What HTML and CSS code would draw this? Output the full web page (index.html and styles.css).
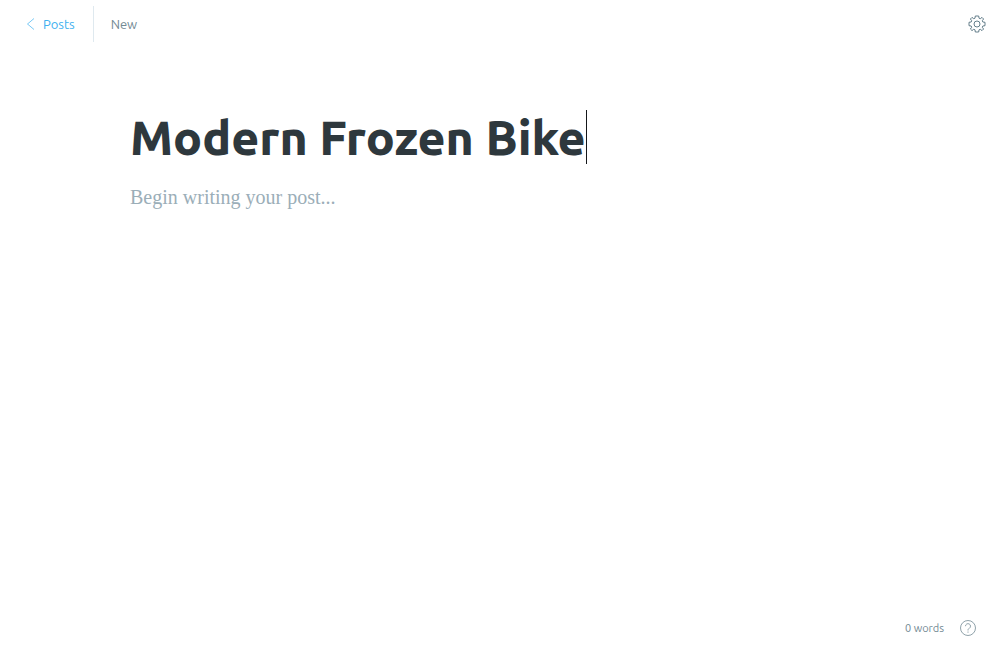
FILE: index.html
```html
<!DOCTYPE html>
<html lang="en">
<head>
<meta charset="utf-8">
<meta name="viewport" content="width=device-width, initial-scale=1">
<title>New post</title>
<link rel="stylesheet" href="styles.css">
</head>
<body class="editor">
<header class="topbar">
  <a class="back" href="#posts">
    <svg class="chevron" viewBox="0 0 8 12" aria-hidden="true"><path d="M7.500 .5 1 6l6.500 5.500"/></svg>
    <span>Posts</span>
  </a>
  <span class="status">New</span>
  <button class="icon-button settings" type="button" aria-label="Settings">
    <svg class="gear" viewBox="0 0 18 18" aria-hidden="true"><path d="M7.300 1h3.400l.3 2.200 1.300.5L14 2.400 15.600 4l-1.300 1.700.5 1.300 2.200.3v3.400l-2.200.3-.5 1.300L15.600 14 14 15.600l-1.700-1.300-1.300.5-.3 2.200H7.300L7 14.800l-1.300-.5L4 15.600 2.400 14l1.300-1.700L3.200 11 1 10.700V7.300L3.200 7l.5-1.300L2.400 4 4 2.400l1.700 1.300L7 3.200z"/><circle cx="9" cy="9" r="3"/></svg>
  </button>
</header>
<main class="page">
  <input class="title" type="text" aria-label="Post title" value="Modern Frozen Bike">
  <textarea class="content" aria-label="Post content" placeholder="Begin writing your post..."></textarea>
</main>
<footer class="footer">
  <span>0 words</span>
  <button class="icon-button" type="button" aria-label="Help">
    <svg class="help" viewBox="0 0 16 16" aria-hidden="true"><circle cx="8" cy="8" r="7.500"/><path d="M5.500 6.200a2.500 2.500 0 1 1 3.800 2.100C8.300 8.900 8 9.200 8 10.500M8 11.500v1.200"/></svg>
  </button>
</footer>
</body>
</html>
```
FILE: styles.css
```css
* {
  box-sizing: border-box;
}

.editor {
  display: flex;
  flex-direction: column;
  min-height: 100vh;
  margin: 0;
  background: #fff;
  color: #738a94;
  font: 13px/20px "Ubuntu", "Noto Sans", sans-serif;
}

.topbar {
  display: flex;
  align-items: center;
  height: 48px;
  padding: 0 14px 0 26px;
}

.back {
  display: flex;
  align-items: center;
  gap: 8px;
  height: 36px;
  padding-right: 18px;
  border-right: 1px solid #dfe9ef;
  color: #3eb0ef;
  text-decoration: none;
}

.status {
  margin-left: 17px;
}

.chevron {
  width: 9px;
  height: 12px;
  stroke-width: 0.7;
}

.chevron,
.gear,
.help {
  display: block;
  fill: none;
  stroke: currentColor;
}

.icon-button {
  padding: 0;
  border: 0;
  background: none;
  color: inherit;
  cursor: pointer;
}

.settings {
  margin-left: auto;
  color: #54707e;
}

.gear {
  width: 18px;
  height: 18px;
  stroke-linejoin: round;
  stroke-width: 0.9;
}

.help {
  width: 16px;
  height: 16px;
  stroke-width: 0.8;
}

.page {
  display: flex;
  flex: 1;
  flex-direction: column;
  align-items: flex-start;
  width: 100%;
  max-width: 740px;
  margin: 0 auto;
  padding-top: 62px;
}

.title {
  field-sizing: content;
  max-width: 100%;
  height: 54px;
  padding: 0;
  border: 0;
  border-right: 1px solid #15171a;
  outline: 0;
  background: none;
  color: #2e383d;
  font: 800 48px/54px "Ubuntu", "Noto Sans", sans-serif;
}

.content {
  flex: 1;
  width: 100%;
  margin-top: 17px;
  padding: 0;
  border: 0;
  outline: 0;
  resize: none;
  background: none;
  color: #2e383d;
  font: 20px/32px "Liberation Serif", serif;
}

.content::placeholder {
  color: #9baeb8;
  opacity: 1;
}

.footer {
  display: flex;
  align-items: center;
  justify-content: flex-end;
  gap: 16px;
  height: 64px;
  padding: 0 24px;
  font-size: 11px;
}
```
